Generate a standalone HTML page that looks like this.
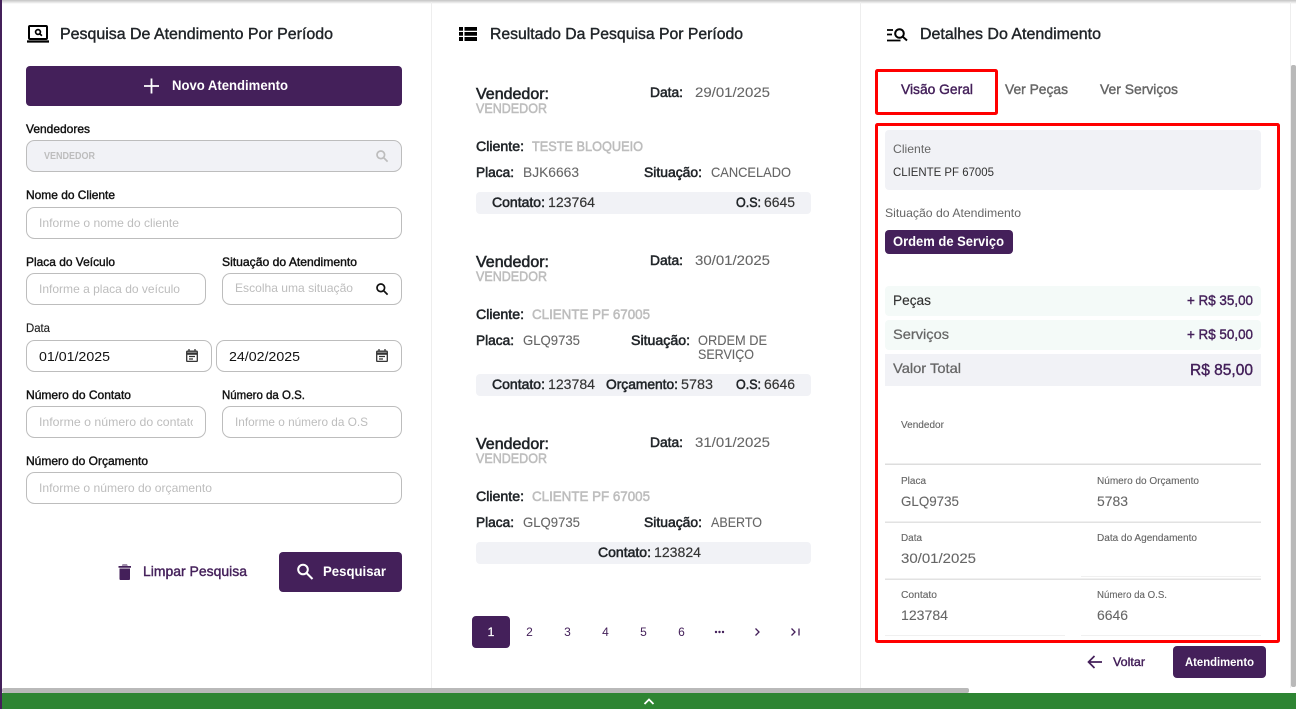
<!DOCTYPE html>
<html lang="pt-BR"><head><meta charset="utf-8"><title>Pesquisa De Atendimento</title>
<style>
html,body{margin:0;padding:0;background:#fff;width:1296px;height:709px;overflow:hidden}
svg{display:block;position:absolute;left:0;top:0}
text{font-family:"Liberation Sans",Arial,sans-serif;font-size:12px;fill:#212529;white-space:pre}
.t{font-size:16px;fill:#212529;stroke:#212529;stroke-width:.4px}
.l{font-size:12px;fill:#111;stroke:#111;stroke-width:.4px}
.p{font-size:12px;fill:#bdbdbd}
.b{font-size:14px;font-weight:700;fill:#fff}
.k{font-size:14px;fill:#212529;stroke:#212529;stroke-width:.55px}
.v{font-size:14px;fill:#666;stroke:#666;stroke-width:.1px}
.g{font-size:14px;fill:#bdbdbd;stroke:#bdbdbd;stroke-width:.55px}
.s{font-size:10px;fill:#666;stroke:#666;stroke-width:.12px}
.n{font-size:12px;fill:#44205a}
.u{fill:#44205a;stroke:#44205a;stroke-width:.4px}
.d{font-size:14px;fill:#333;stroke:#333;stroke-width:.15px}
</style></head><body>
<svg width="1296" height="709" viewBox="0 0 1296 709" xmlns="http://www.w3.org/2000/svg">
<defs><linearGradient id="sh" x1="0" y1="0" x2="0" y2="1"><stop offset="0" stop-color="#c4c4c4"/><stop offset="1" stop-color="#fff"/></linearGradient></defs>
<rect width="1296" height="709" fill="#fff"/>
<rect x="0" y="0" width="1296" height="4" fill="url(#sh)"/>
<rect x="0" y="0" width="2" height="709" fill="#44205a"/>
<rect x="431" y="2" width="1" height="686" fill="#eee"/>
<rect x="860" y="2" width="1" height="686" fill="#eee"/>
<rect x="1290" y="2" width="1" height="686" fill="#eee"/>

<!-- Coluna 1 -->
<g fill="none" stroke="#000"><rect x="29" y="26" width="18" height="13" rx="1" stroke-width="2"/><path d="M27 41.500h22" stroke-width="2.200"/><circle cx="38" cy="32" r="2.400" stroke-width="1.700"/><path d="M39.700 33.700l2.200 2" stroke-width="1.700"/></g>
<text class="t" x="60" y="39" textLength="273" lengthAdjust="spacingAndGlyphs">Pesquisa De Atendimento Por Período</text>
<rect x="26" y="66" width="376" height="40" rx="4" fill="#44205a"/>
<path d="M144 86h15M151.500 78.500v15" stroke="#fff" stroke-width="1.800" fill="none"/>
<text class="b" x="172" y="90" textLength="116" lengthAdjust="spacingAndGlyphs">Novo Atendimento</text>

<text class="l" x="26" y="133" textLength="64" lengthAdjust="spacingAndGlyphs">Vendedores</text>
<rect x="26.500" y="140.500" width="375" height="31" rx="8" fill="#f1f2f6" stroke="#bdbdbd"/>
<text x="44" y="159" style="font-size:10px;font-weight:700;fill:#bdbdbd" textLength="51" lengthAdjust="spacingAndGlyphs">VENDEDOR</text>
<g fill="none" stroke="#bdbdbd" stroke-width="1.700"><circle cx="380.800" cy="154.800" r="3.800"/><path d="M383.600 157.600l4 4"/></g>

<text class="l" x="26" y="199" textLength="89" lengthAdjust="spacingAndGlyphs">Nome do Cliente</text>
<rect x="26.500" y="207.500" width="375" height="31" rx="8" fill="#fff" stroke="#bdbdbd"/>
<text class="p" x="39" y="227" textLength="140" lengthAdjust="spacingAndGlyphs">Informe o nome do cliente</text>

<text class="l" x="26" y="266" textLength="89" lengthAdjust="spacingAndGlyphs">Placa do Veículo</text>
<text class="l" x="222" y="266" textLength="135" lengthAdjust="spacingAndGlyphs">Situação do Atendimento</text>
<rect x="26.500" y="273.500" width="179" height="31" rx="8" fill="#fff" stroke="#bdbdbd"/>
<rect x="222.500" y="273.500" width="179" height="31" rx="8" fill="#fff" stroke="#bdbdbd"/>
<text class="p" x="39" y="293" textLength="141" lengthAdjust="spacingAndGlyphs">Informe a placa do veículo</text>
<text class="p" x="235" y="292" textLength="118" lengthAdjust="spacingAndGlyphs">Escolha uma situação</text>
<g fill="none" stroke="#111" stroke-width="1.700"><circle cx="380.800" cy="287.800" r="3.800"/><path d="M383.600 290.600l4 4"/></g>

<text x="26" y="332" style="fill:#222;stroke:#222;stroke-width:.15px" textLength="24" lengthAdjust="spacingAndGlyphs">Data</text>
<rect x="26.500" y="340.500" width="185" height="31" rx="8" fill="#fff" stroke="#bdbdbd"/>
<rect x="216.500" y="340.500" width="185" height="31" rx="8" fill="#fff" stroke="#bdbdbd"/>
<text x="39" y="361" style="font-size:13.300px;fill:#111" textLength="71" lengthAdjust="spacingAndGlyphs">01/01/2025</text>
<text x="229" y="361" style="font-size:13.300px;fill:#111" textLength="71" lengthAdjust="spacingAndGlyphs">24/02/2025</text>
<g fill="none" stroke="#333" stroke-width="1.300"><rect x="186.700" y="351.200" width="10.600" height="10.200" rx=".8"/><path d="M189 349v2M195 349v2M189 356.500h6M189 359h4"/><path d="M186.700 353.600h10.600" stroke-width="2.400"/></g>
<g fill="none" stroke="#333" stroke-width="1.300"><rect x="376.700" y="351.200" width="10.600" height="10.200" rx=".8"/><path d="M379 349v2M385 349v2M379 356.500h6M379 359h4"/><path d="M376.700 353.600h10.600" stroke-width="2.400"/></g>

<text class="l" x="26" y="399" textLength="105" lengthAdjust="spacingAndGlyphs">Número do Contato</text>
<text class="l" x="222" y="399" textLength="83" lengthAdjust="spacingAndGlyphs">Número da O.S.</text>
<rect x="26.500" y="406.500" width="179" height="31" rx="8" fill="#fff" stroke="#bdbdbd"/>
<rect x="222.500" y="406.500" width="179" height="31" rx="8" fill="#fff" stroke="#bdbdbd"/>
<svg x="39" y="410" width="154" height="24"><text class="p" x="0" y="16" textLength="158" lengthAdjust="spacingAndGlyphs">Informe o número do contato</text></svg>
<text class="p" x="235" y="426" textLength="133" lengthAdjust="spacingAndGlyphs">Informe o número da O.S</text>

<text class="l" x="26" y="465" textLength="122" lengthAdjust="spacingAndGlyphs">Número do Orçamento</text>
<rect x="26.500" y="472.500" width="375" height="31" rx="8" fill="#fff" stroke="#bdbdbd"/>
<text class="p" x="39" y="492" textLength="173" lengthAdjust="spacingAndGlyphs">Informe o número do orçamento</text>

<path d="M118.500 566h12.500v1.700h-12.500zM122.500 564.500h4.500l.8 1h-6zM119.500 568.500h10.500v10.200a1.300 1.300 0 0 1-1.300 1.300h-7.900a1.300 1.300 0 0 1-1.300-1.300z" fill="#44205a"/>
<text class="k u" x="143" y="576" textLength="104" lengthAdjust="spacingAndGlyphs">Limpar Pesquisa</text>
<rect x="279" y="552" width="123" height="40" rx="4" fill="#44205a"/>
<g fill="none" stroke="#fff" stroke-width="2"><circle cx="303" cy="569.500" r="4.800"/><path d="M306.500 573l6 6"/></g>
<text class="b" x="323" y="576" textLength="63" lengthAdjust="spacingAndGlyphs">Pesquisar</text>

<!-- Coluna 2 -->
<path d="M459 27h4v3.700h-4zM464.500 27H477v3.700h-12.500zM459 32h4v3.700h-4zM464.500 32H477v3.700h-12.500zM459 37h4v4h-4zM464.500 37H477v4h-12.500z" fill="#000"/>
<text class="t" x="490" y="39" textLength="253" lengthAdjust="spacingAndGlyphs">Resultado Da Pesquisa Por Período</text>

<!-- Card 1 -->
<text class="k" x="476" y="99" style="font-size:16px" textLength="73" lengthAdjust="spacingAndGlyphs">Vendedor:</text>
<text class="g" x="476" y="113" textLength="71" lengthAdjust="spacingAndGlyphs">VENDEDOR</text>
<text class="k" x="650" y="97" textLength="33" lengthAdjust="spacingAndGlyphs">Data:</text>
<text class="v" x="695" y="97" textLength="75" lengthAdjust="spacingAndGlyphs">29/01/2025</text>
<text class="k" x="476" y="151" textLength="48" lengthAdjust="spacingAndGlyphs">Cliente:</text>
<text class="g" x="532" y="151" textLength="111" lengthAdjust="spacingAndGlyphs">TESTE BLOQUEIO</text>
<text class="k" x="476" y="177" textLength="38" lengthAdjust="spacingAndGlyphs">Placa:</text>
<text class="v" x="523" y="177" textLength="56" lengthAdjust="spacingAndGlyphs">BJK6663</text>
<text class="k" x="644" y="177" textLength="58" lengthAdjust="spacingAndGlyphs">Situação:</text>
<text class="v" x="711" y="177" textLength="80" lengthAdjust="spacingAndGlyphs">CANCELADO</text>
<rect x="476" y="192" width="335" height="22" rx="4" fill="#f1f2f6"/>
<text class="k" x="492" y="207" textLength="53" lengthAdjust="spacingAndGlyphs">Contato:</text>
<text class="d" x="548" y="207" textLength="47" lengthAdjust="spacingAndGlyphs">123764</text>
<text class="k" x="736" y="207" textLength="25" lengthAdjust="spacingAndGlyphs">O.S:</text>
<text class="d" x="764" y="207" textLength="31" lengthAdjust="spacingAndGlyphs">6645</text>

<!-- Card 2 -->
<text class="k" x="476" y="267" style="font-size:16px" textLength="73" lengthAdjust="spacingAndGlyphs">Vendedor:</text>
<text class="g" x="476" y="281" textLength="71" lengthAdjust="spacingAndGlyphs">VENDEDOR</text>
<text class="k" x="650" y="265" textLength="33" lengthAdjust="spacingAndGlyphs">Data:</text>
<text class="v" x="695" y="265" textLength="75" lengthAdjust="spacingAndGlyphs">30/01/2025</text>
<text class="k" x="476" y="319" textLength="48" lengthAdjust="spacingAndGlyphs">Cliente:</text>
<text class="g" x="532" y="319" textLength="118" lengthAdjust="spacingAndGlyphs">CLIENTE PF 67005</text>
<text class="k" x="476" y="345" textLength="38" lengthAdjust="spacingAndGlyphs">Placa:</text>
<text class="v" x="523" y="345" textLength="57" lengthAdjust="spacingAndGlyphs">GLQ9735</text>
<text class="k" x="631" y="345" textLength="59" lengthAdjust="spacingAndGlyphs">Situação:</text>
<text class="v" x="698" y="345" textLength="69" lengthAdjust="spacingAndGlyphs">ORDEM DE</text>
<text class="v" x="698" y="359" textLength="56" lengthAdjust="spacingAndGlyphs">SERVIÇO</text>
<rect x="476" y="374" width="335" height="22" rx="4" fill="#f1f2f6"/>
<text class="k" x="492" y="389" textLength="53" lengthAdjust="spacingAndGlyphs">Contato:</text>
<text class="d" x="548" y="389" textLength="47" lengthAdjust="spacingAndGlyphs">123784</text>
<text class="k" x="606" y="389" textLength="72" lengthAdjust="spacingAndGlyphs">Orçamento:</text>
<text class="d" x="681" y="389" textLength="32" lengthAdjust="spacingAndGlyphs">5783</text>
<text class="k" x="736" y="389" textLength="25" lengthAdjust="spacingAndGlyphs">O.S:</text>
<text class="d" x="764" y="389" textLength="31" lengthAdjust="spacingAndGlyphs">6646</text>

<!-- Card 3 -->
<text class="k" x="476" y="449" style="font-size:16px" textLength="73" lengthAdjust="spacingAndGlyphs">Vendedor:</text>
<text class="g" x="476" y="463" textLength="71" lengthAdjust="spacingAndGlyphs">VENDEDOR</text>
<text class="k" x="650" y="447" textLength="33" lengthAdjust="spacingAndGlyphs">Data:</text>
<text class="v" x="695" y="447" textLength="75" lengthAdjust="spacingAndGlyphs">31/01/2025</text>
<text class="k" x="476" y="501" textLength="48" lengthAdjust="spacingAndGlyphs">Cliente:</text>
<text class="g" x="532" y="501" textLength="118" lengthAdjust="spacingAndGlyphs">CLIENTE PF 67005</text>
<text class="k" x="476" y="527" textLength="38" lengthAdjust="spacingAndGlyphs">Placa:</text>
<text class="v" x="523" y="527" textLength="57" lengthAdjust="spacingAndGlyphs">GLQ9735</text>
<text class="k" x="644" y="527" textLength="58" lengthAdjust="spacingAndGlyphs">Situação:</text>
<text class="v" x="711" y="527" textLength="51" lengthAdjust="spacingAndGlyphs">ABERTO</text>
<rect x="476" y="542" width="335" height="22" rx="4" fill="#f1f2f6"/>
<text class="k" x="598" y="557" textLength="53" lengthAdjust="spacingAndGlyphs">Contato:</text>
<text class="d" x="654" y="557" textLength="47" lengthAdjust="spacingAndGlyphs">123824</text>

<!-- Paginação -->
<rect x="472" y="616" width="38" height="32" rx="4" fill="#44205a"/>
<text x="491" y="636" text-anchor="middle" style="font-size:12px;fill:#fff;stroke:#fff;stroke-width:.3px">1</text>
<text class="n" x="529.500" y="636" text-anchor="middle">2</text>
<text class="n" x="567.500" y="636" text-anchor="middle">3</text>
<text class="n" x="605.500" y="636" text-anchor="middle">4</text>
<text class="n" x="643.500" y="636" text-anchor="middle">5</text>
<text class="n" x="681.500" y="636" text-anchor="middle">6</text>
<g fill="#44205a"><circle cx="716" cy="632" r="1.200"/><circle cx="719.500" cy="632" r="1.200"/><circle cx="723" cy="632" r="1.200"/></g>
<path d="M755.500 628.500l3.500 3.500-3.500 3.500" fill="none" stroke="#44205a" stroke-width="1.300"/>
<path d="M791.500 628.500l3.500 3.500-3.500 3.500M799 628.500v7" fill="none" stroke="#44205a" stroke-width="1.300"/>

<!-- Coluna 3 -->
<g fill="none" stroke="#000"><path d="M887 30h6M887 34.500h5M887 40.500h13.500" stroke-width="1.700"/><circle cx="899.500" cy="33.500" r="4.300" stroke-width="2"/><path d="M902.500 36.500l4.500 4" stroke-width="2"/></g>
<text class="t" x="920" y="39" textLength="181" lengthAdjust="spacingAndGlyphs">Detalhes Do Atendimento</text>

<rect x="876.500" y="70.500" width="120" height="43" rx="1" fill="none" stroke="#f00" stroke-width="3"/>
<text class="k u" x="901" y="94" textLength="72" lengthAdjust="spacingAndGlyphs">Visão Geral</text>
<text class="v" x="1005" y="94" style="stroke:#666;stroke-width:.4px" textLength="63" lengthAdjust="spacingAndGlyphs">Ver Peças</text>
<text class="v" x="1100" y="94" style="stroke:#666;stroke-width:.4px" textLength="78" lengthAdjust="spacingAndGlyphs">Ver Serviços</text>

<rect x="876.500" y="124.500" width="402" height="517" rx="1" fill="none" stroke="#f00" stroke-width="3"/>
<rect x="885" y="130" width="376" height="60" rx="4" fill="#f1f2f6"/>
<text x="893" y="153" style="fill:#666" textLength="38" lengthAdjust="spacingAndGlyphs">Cliente</text>
<text x="893" y="176" style="fill:#333" textLength="101" lengthAdjust="spacingAndGlyphs">CLIENTE PF 67005</text>
<text x="885" y="217" style="fill:#666" textLength="136" lengthAdjust="spacingAndGlyphs">Situação do Atendimento</text>
<rect x="885" y="230" width="128" height="24" rx="4" fill="#44205a"/>
<text class="b" x="893" y="246" textLength="111" lengthAdjust="spacingAndGlyphs">Ordem de Serviço</text>

<rect x="885" y="286" width="376" height="30" rx="4" fill="#f4faf8"/>
<text class="d" x="893" y="305" textLength="38" lengthAdjust="spacingAndGlyphs">Peças</text>
<text class="u" x="1187" y="305" style="font-size:14px" textLength="66" lengthAdjust="spacingAndGlyphs">+ R$ 35,00</text>
<rect x="885" y="320" width="376" height="30" rx="4" fill="#f4faf8"/>
<text class="v" x="893" y="339" style="stroke-width:.25px" textLength="56" lengthAdjust="spacingAndGlyphs">Serviços</text>
<text class="u" x="1187" y="339" style="font-size:14px" textLength="66" lengthAdjust="spacingAndGlyphs">+ R$ 50,00</text>
<rect x="885" y="354" width="376" height="32" fill="#f1f2f6"/>
<text class="v" x="893" y="373" style="stroke-width:.25px" textLength="68" lengthAdjust="spacingAndGlyphs">Valor Total</text>
<text class="u" x="1190" y="375" style="font-size:16px" textLength="63" lengthAdjust="spacingAndGlyphs">R$ 85,00</text>

<text class="s" x="901" y="428" textLength="43" lengthAdjust="spacingAndGlyphs">Vendedor</text>
<rect x="885" y="463.500" width="376" height="1.500" fill="#ddd"/>
<text class="s" x="901" y="484" textLength="25" lengthAdjust="spacingAndGlyphs">Placa</text>
<text class="s" x="1097" y="484" textLength="102" lengthAdjust="spacingAndGlyphs">Número do Orçamento</text>
<text class="v" x="901" y="506" textLength="58" lengthAdjust="spacingAndGlyphs">GLQ9735</text>
<text class="v" x="1097" y="506" textLength="31" lengthAdjust="spacingAndGlyphs">5783</text>
<rect x="885" y="521.500" width="376" height="1.500" fill="#e2e2e2"/>
<text class="s" x="901" y="541" textLength="21" lengthAdjust="spacingAndGlyphs">Data</text>
<text class="s" x="1097" y="541" textLength="100" lengthAdjust="spacingAndGlyphs">Data do Agendamento</text>
<text class="v" x="901" y="563" textLength="75" lengthAdjust="spacingAndGlyphs">30/01/2025</text>
<rect x="1081" y="576" width="180" height="1" fill="#f0f0f0"/>
<rect x="885" y="578.500" width="376" height="1.500" fill="#e2e2e2"/>
<text class="s" x="901" y="598" textLength="36" lengthAdjust="spacingAndGlyphs">Contato</text>
<text class="s" x="1097" y="598" textLength="70" lengthAdjust="spacingAndGlyphs">Número da O.S.</text>
<text class="v" x="901" y="620" textLength="47" lengthAdjust="spacingAndGlyphs">123784</text>
<text class="v" x="1097" y="620" textLength="31" lengthAdjust="spacingAndGlyphs">6646</text>
<rect x="885" y="635" width="180" height="1" fill="#f0f0f0"/>
<rect x="1081" y="635" width="180" height="1" fill="#f0f0f0"/>

<path d="M1102 662h-12.500M1094.500 656l-6 6 6 6" fill="none" stroke="#44205a" stroke-width="1.700"/>
<text class="u" x="1113" y="666" style="font-size:12px" textLength="32" lengthAdjust="spacingAndGlyphs">Voltar</text>
<rect x="1173" y="646" width="93" height="32" rx="4" fill="#44205a"/>
<text x="1185" y="666" style="font-size:12px;font-weight:700;fill:#fff" textLength="69" lengthAdjust="spacingAndGlyphs">Atendimento</text>

<!-- Barras -->
<rect x="1291" y="65" width="5" height="622" rx="2" fill="#b9b9b9"/>
<rect x="2" y="688" width="967" height="5" rx="2" fill="#b9b9b9"/>
<rect x="2" y="693" width="1294" height="16" fill="#2e8533"/>
<path d="M644.500 704l4.500-4.500 4.500 4.500" fill="none" stroke="#fff" stroke-width="1.800"/>
</svg>
</body></html>
